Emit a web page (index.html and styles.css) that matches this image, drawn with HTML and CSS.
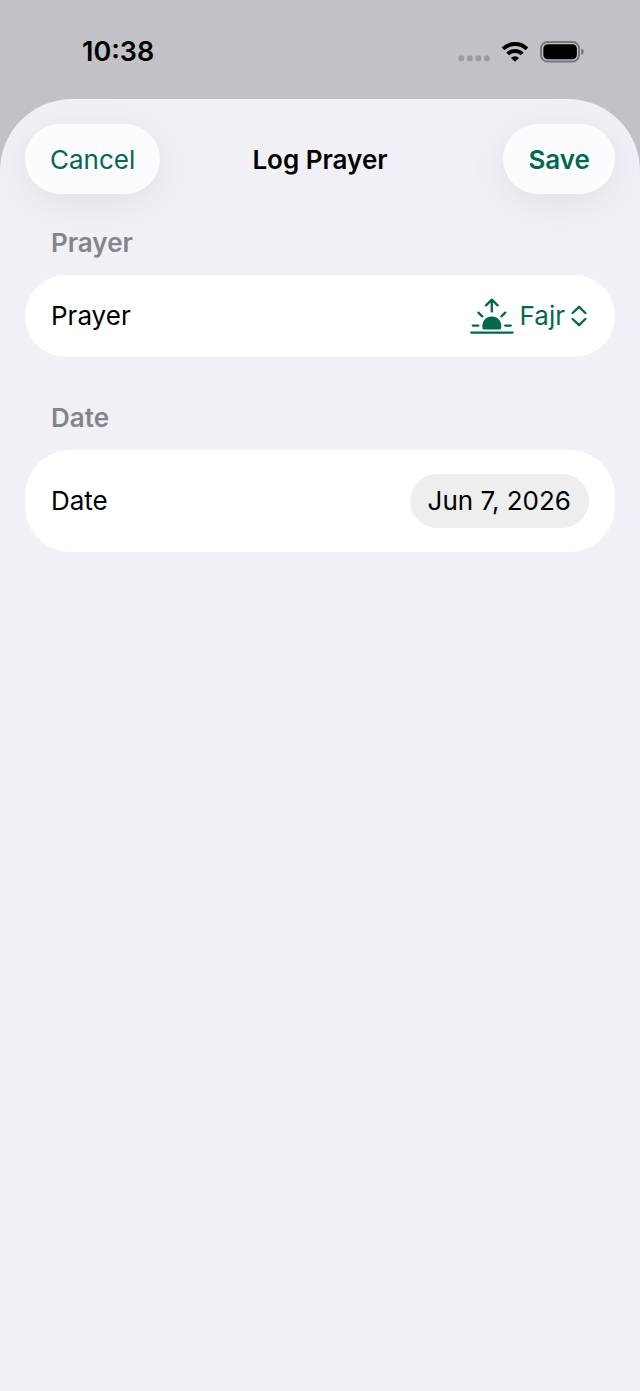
FILE: index.html
```
<!DOCTYPE html>
<html lang="en">

<head>
    <meta charset="UTF-8">
    <meta name="viewport" content="width=device-width, initial-scale=1.0">
    <title>Log Prayer</title>
    <link rel="stylesheet" href="styles.css">
</head>

<body>
    <header class="status-bar">
        <span class="time">10:38</span>
        <div class="status-icons">
            <svg class="signal" width="32" height="8" viewBox="0 0 32 8">
                <rect x="0.4" y="0.6" width="5.6" height="5.6" rx="2" />
                <rect x="9" y="0.6" width="5.6" height="5.6" rx="2" />
                <rect x="17.6" y="0.6" width="5.6" height="5.6" rx="2" />
                <rect x="26.2" y="0.6" width="5.6" height="5.6" rx="2" />
            </svg>
            <svg class="wifi" width="28" height="20" viewBox="0 0 28 20">
                <path d="M2.1 6.9 A17 17 0 0 1 25.9 6.9" />
                <path d="M6.7 11.9 A10.4 10.4 0 0 1 21.3 11.9" />
                <path class="wifi-dot" d="M14 19.8 L9.9 15.9 A5.8 5.8 0 0 1 18.1 15.9 Z" />
            </svg>
            <svg class="battery" width="44" height="22" viewBox="0 0 44 22">
                <rect class="battery-case" x="1" y="1" width="38" height="19.5" rx="6.5" />
                <rect x="3.3" y="3.3" width="33.6" height="15" rx="4.5" />
                <path class="battery-tip" d="M41.2 7.6 Q43.8 8.4 43.8 10.8 Q43.8 13.2 41.2 14 Z" />
            </svg>
        </div>
    </header>

    <main class="sheet">
        <div class="toolbar">
            <button type="button" class="btn">Cancel</button>
            <h1>Log Prayer</h1>
            <button type="submit" form="prayer-form" class="btn btn-save">Save</button>
        </div>

        <form id="prayer-form">
            <section class="form-section">
                <h2>Prayer</h2>
                <div class="row">
                    <label for="prayer">Prayer</label>
                    <div class="picker">
                        <svg class="sunrise" width="44" height="36" viewBox="0 0 44 36">
                            <path d="M21.8 13.6 V1.8 M16 7.4 L21.8 1.6 L27.6 7.4" />
                            <path d="M8.4 14.6 L12.2 18.4 M35.2 14.6 L31.4 18.4" />
                            <path d="M2.8 27.6 H8.4 M35.2 27.6 H40.8" />
                            <path d="M1.2 34.6 H42.6" />
                            <path class="sun" d="M12.9 31.6 C10.6 24.6 15 18.4 21.8 18.4 C28.6 18.4 33 24.6 30.7 31.6 Z" />
                        </svg>
                        <select id="prayer" name="prayer">
                            <option selected>Fajr</option>
                            <option>Dhuhr</option>
                            <option>Asr</option>
                            <option>Maghrib</option>
                            <option>Isha</option>
                        </select>
                        <svg class="chevrons" width="16" height="22" viewBox="0 0 16 22">
                            <path d="M1.6 8 L8 1.8 L14.4 8 M1.6 14 L8 20.2 L14.4 14" />
                        </svg>
                    </div>
                </div>
            </section>

            <section class="form-section">
                <h2>Date</h2>
                <div class="row row-date">
                    <label for="date">Date</label>
                    <button type="button" id="date" class="date-btn">Jun 7, 2026</button>
                </div>
            </section>
        </form>
    </main>
</body>

</html>
```

FILE: styles.css
```
* {
    box-sizing: border-box;
}

body {
    margin: 0;
    min-height: 100vh;
    display: flex;
    flex-direction: column;
    font-family: Inter, "Liberation Sans", sans-serif;
    font-size: 26px;
    line-height: 32px;
    color: #000000;
    background-color: #c2c1c7;
}

button,
select {
    font: inherit;
    border: none;
    cursor: pointer;
}

h1,
h2 {
    margin: 0;
    font-size: 26px;
    font-weight: 600;
}

.status-bar {
    display: flex;
    justify-content: space-between;
    align-items: center;
    height: 99px;
    padding: 5px 56px 0 82px;
}

.time {
    font-size: 27px;
    font-weight: 600;
}

.status-icons {
    display: flex;
    align-items: center;
    gap: 11px;
}

.signal {
    align-self: flex-end;
    fill: #9c9ba0;
}

.wifi {
    fill: none;
    stroke: #000000;
    stroke-width: 4;
}

.wifi .wifi-dot {
    fill: #000000;
    stroke: none;
}

.battery-case {
    fill: none;
    stroke: #77767a;
    stroke-width: 2;
}

.battery-tip {
    fill: #77767a;
}

.sheet {
    flex: 1;
    padding: 25px;
    border-radius: 72px 72px 0 0;
    background-color: #f1f0f6;
}

.toolbar {
    display: grid;
    grid-template-columns: 1fr auto 1fr;
    align-items: center;
}

.toolbar h1 {
    padding-top: 2px;
}

.btn {
    justify-self: start;
    height: 70px;
    padding: 2px 25px 0;
    border-radius: 35px;
    color: #04684f;
    background-color: #fcfcff;
    box-shadow: 0 8px 40px rgba(0, 0, 0, 0.07);
}

.btn-save {
    justify-self: end;
    font-weight: 600;
}

.form-section {
    margin-top: 33px;
}

.form-section + .form-section {
    margin-top: 45px;
}

.form-section h2 {
    padding: 0 26px;
    margin-bottom: 16px;
    color: #85848a;
}

.row {
    display: flex;
    justify-content: space-between;
    align-items: center;
    min-height: 82px;
    padding: 0 26px;
    border-radius: 46px;
    background-color: #ffffff;
}

.row-date {
    min-height: 102px;
}

.picker {
    display: flex;
    align-items: center;
    gap: 6px;
    padding-right: 2px;
    color: #04684f;
}

.picker svg {
    fill: none;
    stroke: #04684f;
    stroke-width: 2.3;
    stroke-linecap: round;
    stroke-linejoin: round;
}

.picker .sun {
    fill: #04684f;
    stroke: none;
}

.picker select {
    appearance: none;
    field-sizing: content;
    padding: 0;
    color: inherit;
    background: none;
}

.date-btn {
    height: 54px;
    padding: 0 18px;
    border-radius: 27px;
    color: #000000;
    background-color: #eeeeef;
}
```
